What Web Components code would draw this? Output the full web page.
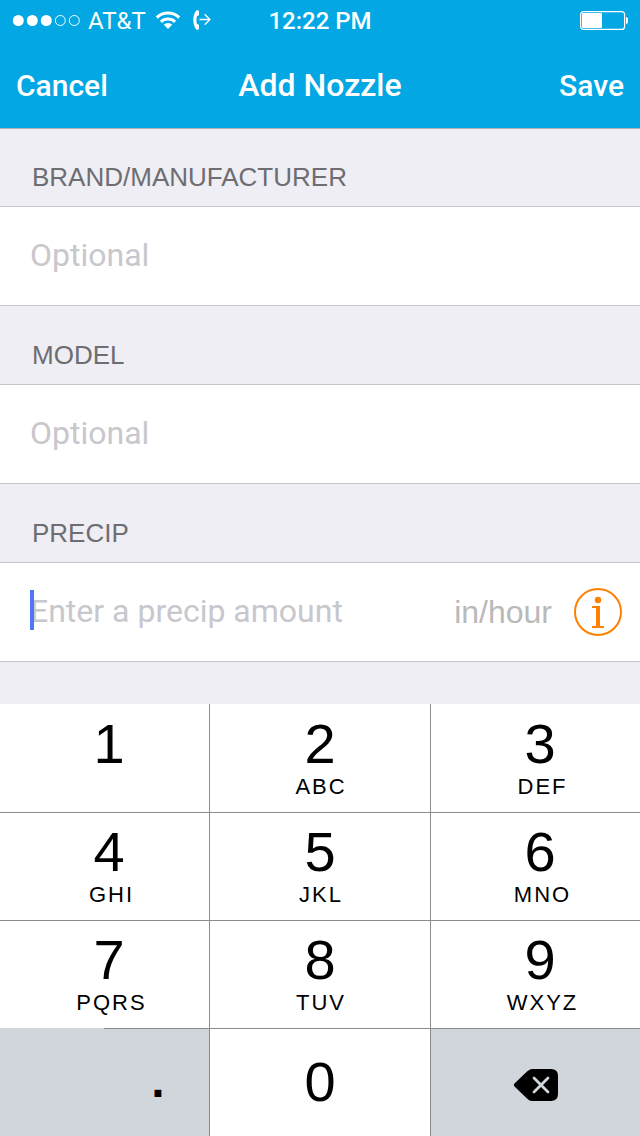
<!DOCTYPE html>
<html lang="en">
<head>
<meta charset="utf-8">
<meta name="viewport" content="width=device-width, initial-scale=1">
<title>Add Nozzle</title>
<style>
  html, body { margin: 0; }
  body { background: #efeef4; font-family: Roboto, "Liberation Sans", sans-serif; }
</style>
</head>
<body>
<nozzle-screen></nozzle-screen>

<script>
const define = (name, html, setup) => {
  const template = document.createElement('template');
  template.innerHTML = html;
  customElements.define(name, class extends HTMLElement {
    constructor() {
      super();
      this.attachShadow({ mode: 'open' }).append(template.content.cloneNode(true));
    }
    connectedCallback() {
      if (setup && !this.ready) { this.ready = true; setup(this, this.shadowRoot); }
    }
  });
};

define('status-bar', `
  <style>
    :host { display: grid; grid-template-columns: 1fr auto 1fr; align-items: center; height: 40px; padding: 0 12px; color: #fff; font-size: 24px; line-height: 40px; }
    .left { display: flex; align-items: center; }
    .carrier { margin: 0 9px 0 8px; }
    .time { font-weight: 500; }
    .carrier, .time { padding-top: 2px; line-height: 38px; }
    .right { display: flex; justify-content: flex-end; }
    svg { display: block; flex: none; }
    .wifi { margin-right: 12px; }
  </style>
  <div class="left">
    <svg width="68" height="12" viewBox="0 0 68 12" role="img" aria-label="Signal 3 of 5">
      <g fill="#fff"><circle cx="6.300" cy="6.500" r="5.500"/><circle cx="20.300" cy="6.500" r="5.500"/><circle cx="34.300" cy="6.500" r="5.500"/></g>
      <g fill="none" stroke="#fff"><circle cx="48.300" cy="6.500" r="5"/><circle cx="62.300" cy="6.500" r="5"/></g>
    </svg>
    <span class="carrier">AT&amp;T</span>
    <svg class="wifi" width="26" height="18" viewBox="0 0 26 18" role="img" aria-label="Wi-Fi">
      <g fill="none" stroke="#fff" stroke-width="3"><path d="M1.800 6.600a16.200 16.200 0 0 1 22.400 0"/><path d="M5.900 10.900a10.300 10.300 0 0 1 14.200 0"/></g>
      <path fill="#fff" d="M8.700 13.600a6.500 6.500 0 0 1 8.600 0L13 18z"/>
    </svg>
    <svg width="18" height="20" viewBox="0 0 18 20" role="img" aria-label="Call forwarding">
      <path fill="#fff" d="M3.500.3C5 0 6 .5 6 1.500v3c0 1-1 1.300-2 1.500-.8 2.600-.8 5.400 0 8C5 14.200 6 14.500 6 15.500v3c0 1-1 1.500-2.500 1.200C-.8 15-.8 5 3.500.3z"/>
      <path fill="none" stroke="#fff" stroke-width="1.300" d="M6.500 9.500h10M11.700 4.300l5.200 5.200-5.200 5.200"/>
    </svg>
  </div>
  <span class="time">12:22 PM</span>
  <div class="right">
    <svg width="48" height="19" viewBox="0 0 48 19" role="img" aria-label="Battery 45%">
      <rect x=".6" y=".6" width="44" height="17.800" rx="3" fill="none" stroke="#fff" stroke-width="1.200"/>
      <rect x="2" y="2" width="20" height="15" rx="1" fill="#fff"/>
      <path fill="#fff" d="M46 6c3.500.5 3.500 6.500 0 7z"/>
    </svg>
  </div>`);

define('nav-bar', `
  <style>
    :host { display: grid; grid-template-columns: 1fr auto 1fr; align-items: center; height: 88px; padding: 0 16px; border-bottom: 1px solid #b2b2b2; color: #fff; font-weight: 500; }
    h1, button { padding-top: 4px; }
    h1 { margin: 0; font-size: 32px; line-height: 40px; font-weight: 500; }
    button { all: unset; padding-top: 4px; font-size: 30px; line-height: 40px; cursor: pointer; }
    h1 { padding-bottom: 2px; }
    .save { justify-self: end; }
    .cancel { justify-self: start; }
  </style>
  <button class="cancel" type="button">Cancel</button>
  <h1><slot></slot></h1>
  <button class="save" type="button">Save</button>`);

define('form-field', `
  <style>
    :host { display: block; }
    label { display: block; box-sizing: border-box; height: 78px; padding: 33px 32px 0; color: #6d6d72; font: 26px/32px "Liberation Sans", Arial, sans-serif; }
    :host([first]) label { height: 77px; padding-top: 32px; }
    .row { display: flex; align-items: center; height: 98px; padding: 0 18px 0 30px; border: solid #c8c7cc; border-width: 1px 0; background: #fff; position: relative; }
    input { flex: 1; min-width: 0; border: 0; padding: 0 0 2px; margin: 0; outline: 0; background: none; height: 48px; font: 32px/48px Roboto, sans-serif; color: #000; }
    input::placeholder { color: #c7c7cd; opacity: 1; }
    .caret { display: none; position: absolute; left: 30px; top: 27px; width: 4px; height: 40px; background: #4f76f6; }
    :host([active]) .caret { display: block; }
  </style>
  <label for="field"></label>
  <div class="row"><input id="field" type="text" inputmode="decimal"><span class="caret"></span><slot></slot></div>`,
  (host, root) => {
    root.querySelector('label').textContent = host.getAttribute('label');
    root.querySelector('input').placeholder = host.getAttribute('placeholder');
  });

define('unit-info', `
  <style>
    :host { display: flex; align-items: center; gap: 22px; color: #b9b9b9; font: 32px/48px "Liberation Sans", Arial, sans-serif; }
    button { all: unset; cursor: pointer; }
    svg { display: block; }
  </style>
  <span><slot></slot></span>
  <button type="button" aria-label="About precipitation rate">
    <svg width="48" height="48" viewBox="0 0 48 48">
      <circle cx="24" cy="24" r="23" fill="none" stroke="#ff8000" stroke-width="2"/>
      <circle cx="24" cy="12" r="3.200" fill="#ff8000"/>
      <path fill="none" stroke="#ff8000" stroke-width="2" d="M18 19h6M18 39h12"/>
      <path fill="none" stroke="#ff8000" stroke-width="4" d="M24 18v21"/>
    </svg>
  </button>`);

define('pad-key', `
  <style>
    :host { display: grid; background: #fff; }
    :host([muted]) { background: #d1d5dc; }
    button { all: unset; box-sizing: border-box; display: flex; flex-direction: column; align-items: center; cursor: pointer; color: #000; font-family: "Liberation Sans", Arial, sans-serif; padding-top: 11px; }
    :host([top]) button { padding-top: 12px; }
    :host([side]) button { padding-left: 9px; }
    .digit { font-size: 56px; line-height: 56px; }
    .letters { font-size: 22px; line-height: 28px; letter-spacing: 2px; padding: 1px 0 0 2px; }
    :host([side]) .letters { padding-left: 5px; }
    :host([centered]) button { justify-content: center; padding: 0 0 2px; }
    :host([point]) .digit { font-size: 48px; font-weight: 700; }
    :host([point]) button { padding: 0 0 4px 3px; }
    :host([name]) button { padding: 4px 0 0; }
  </style>
  <button type="button"><span class="digit"><slot></slot></span><span class="letters"></span></button>`,
  (host, root) => {
    const letters = root.querySelector('.letters');
    if (host.hasAttribute('letters')) letters.textContent = host.getAttribute('letters');
    else letters.remove();
    if (host.hasAttribute('name')) root.querySelector('button').setAttribute('aria-label', host.getAttribute('name'));
  });

define('number-pad', `
  <style>
    :host { display: grid; grid-template-columns: 209fr 220fr 209fr; grid-template-rows: 108px repeat(3, 107px); gap: 1px; background: #8c8c8c; }
    .split { display: grid; grid-template-columns: 104fr 105fr; }
    .blank { background: #d1d5dc; margin-top: -1px; }
    svg { display: block; }
  </style>
  <pad-key top side>1</pad-key>
  <pad-key top letters="ABC">2</pad-key>
  <pad-key top side letters="DEF">3</pad-key>
  <pad-key side letters="GHI">4</pad-key>
  <pad-key letters="JKL">5</pad-key>
  <pad-key side letters="MNO">6</pad-key>
  <pad-key side letters="PQRS">7</pad-key>
  <pad-key letters="TUV">8</pad-key>
  <pad-key side letters="WXYZ">9</pad-key>
  <div class="split"><span class="blank"></span><pad-key muted centered point>.</pad-key></div>
  <pad-key centered>0</pad-key>
  <pad-key muted centered name="Delete">
    <svg width="46" height="34" viewBox="0 0 46 34">
      <path d="M1.500 15.500 14 3.500Q16.500 1 19 1h19q7 0 7 7v18q0 7-7 7H19q-2.500 0-5-2.500l-12.500-12Q0 17 1.500 15.500z"/>
      <path fill="none" stroke="#d1d5dc" stroke-width="2.800" stroke-linecap="round" d="m21 10 14 14m0-14L21 24"/>
    </svg>
  </pad-key>`);

define('nozzle-screen', `
  <style>
    :host { display: flex; flex-direction: column; min-height: 100vh; }
    header { background: #02a7e3; }
    main { flex: 1; background: #efeef4; }
  </style>
  <header><status-bar></status-bar><nav-bar>Add Nozzle</nav-bar></header>
  <main>
    <form-field first label="BRAND/MANUFACTURER" placeholder="Optional"></form-field>
    <form-field label="MODEL" placeholder="Optional"></form-field>
    <form-field active label="PRECIP" placeholder="Enter a precip amount"><unit-info>in/hour</unit-info></form-field>
  </main>
  <number-pad></number-pad>`);
</script>
</body>
</html>
